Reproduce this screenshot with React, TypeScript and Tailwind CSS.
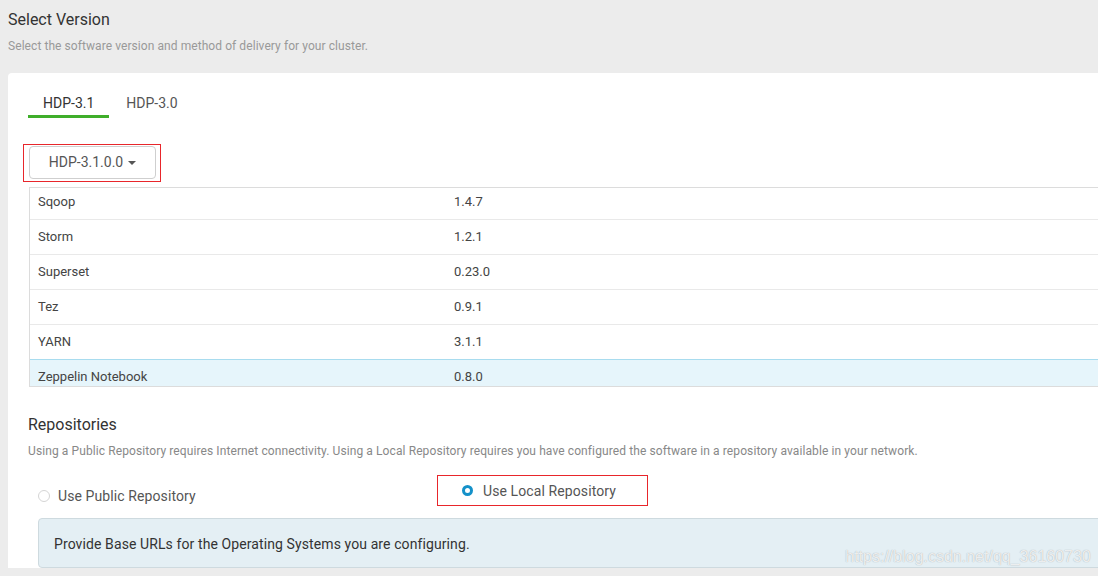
import React from "react";

type StackRow = { name: string; version: string; active?: boolean };

const rows: StackRow[] = [
  { name: "Sqoop", version: "1.4.7" },
  { name: "Storm", version: "1.2.1" },
  { name: "Superset", version: "0.23.0" },
  { name: "Tez", version: "0.9.1" },
  { name: "YARN", version: "3.1.1" },
  { name: "Zeppelin Notebook", version: "0.8.0", active: true },
];

export default function App() {
  return (
    <div className="relative h-[576px] w-[1098px] overflow-hidden bg-[#ececec] font-['Roboto',sans-serif] text-[#333]">
      <div className="pl-2 pt-[9px]">
        <h2 className="text-[16px] leading-[22px] text-[#333]">Select Version</h2>
        <p className="mt-[7px] text-[12px] leading-[16px] tracking-[0.07px] text-[#999]">
          Select the software version and method of delivery for your cluster.
        </p>
      </div>

      <div className="ml-2 mt-[19px] w-[1200px] rounded-tl-[4px] bg-white pl-5 pt-5">
        {/* version tabs */}
        <div className="flex">
          <div className="border-b-[3px] border-[#3fae2a] px-[15px] pb-[2px] text-[14px] leading-[20px] text-[#333]">
            HDP-3.1
          </div>
          <div className="ml-[2px] px-[15px] pb-[5px] text-[14px] leading-[20px] text-[#555]">HDP-3.0</div>
        </div>

        {/* stack version dropdown */}
        <div className="-ml-[5px] mt-[26px] w-[138px] border border-solid border-[#e8262b] pb-[2px] pl-[5px] pr-[4px] pt-px">
          <button className="flex h-[33px] w-[127px] items-center justify-center gap-[5px] rounded-[4px] border border-[#cfcfcf] bg-white text-[14px] text-[#555]">
            HDP-3.1.0.0
            <span className="mt-px border-x-[4px] border-t-[4px] border-x-transparent border-t-[#555]" />
          </button>
        </div>

        {/* services table */}
        <div className="ml-px mt-[5px] h-[200px] overflow-hidden border-y border-l border-[#dcdcdc]">
          <div className="-mt-[4px]">
            {rows.map((row, i) => (
              <div
                key={row.name}
                className={
                  "flex h-[35px] items-center text-[13px] text-[#444] " +
                  (i === 0 ? "pt-px " : "border-t ") +
                  (row.active ? "border-[#a8dcef] bg-[#e6f5fb]" : "border-[#e9e9e9]")
                }
              >
                <div className="w-[424px] pl-2">{row.name}</div>
                <div>{row.version}</div>
              </div>
            ))}
          </div>
        </div>

        {/* repositories */}
        <h3 className="mt-[27px] text-[16px] leading-[22px] text-[#333]">Repositories</h3>
        <p className="mt-[7px] text-[12px] leading-[16px] tracking-[0.1px] text-[#888]">
          Using a Public Repository requires Internet connectivity. Using a Local Repository requires you have configured
          the software in a repository available in your network.
        </p>

        <div className="mt-4 flex items-start">
          <label className="ml-[10px] mt-[11px] flex w-[399px] items-center text-[14px] leading-[20px] tracking-[0.1px] text-[#555]">
            <span className="h-[12px] w-[12px] rounded-full border border-[#d5d5d5] bg-white" />
            <span className="ml-2">Use Public Repository</span>
          </label>
          <div className="w-[211px] bg-[#e8262b] p-px">
            <div className="flex h-[29px] items-center bg-white pl-[24px]">
              <span className="h-[11px] w-[11px] rounded-full border-[3px] border-[#1491c9] bg-white" />
              <span className="ml-[10px] text-[14px] leading-[20px] tracking-[0.1px] text-[#555]">
                Use Local Repository
              </span>
            </div>
          </div>
        </div>

        <div className="ml-[10px] mt-[12px] h-[50px] rounded-[4px] border border-[#cedadf] bg-[#e4eff4] pl-[15px] pt-[15px] text-[14px] leading-[20px] tracking-[0.1px] text-[#333]">
          Provide Base URLs for the Operating Systems you are configuring.
        </div>
      </div>

      {/* blog watermark */}
      <div className="absolute left-[845px] top-[548px] font-['Liberation_Sans',Arial,sans-serif] text-[16px] leading-[18px] text-white/80 [text-shadow:0_0_1px_rgba(0,0,0,0.35)]">
        https://blog.csdn.net/qq_36160730
      </div>
    </div>
  );
}
